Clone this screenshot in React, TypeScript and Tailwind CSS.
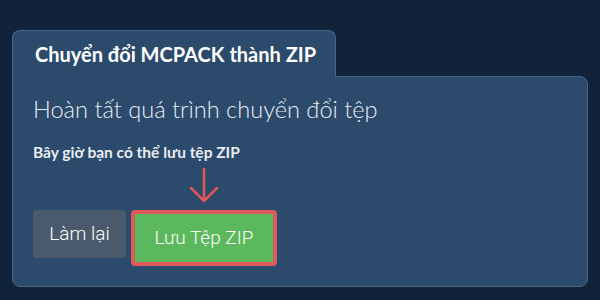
export default function App() {
  return (
    <div className="w-[600px] h-[300px] bg-[#10233a] px-[12px] pt-[30px] font-['Lato',sans-serif]">
      {/* Tab */}
      <div className="relative z-10 -mb-px w-[324px] h-[47px] bg-[#2c4a6b] border border-b-0 border-[#4a6586] rounded-t-[8px] pl-[22px] pt-[12px]">
        <span className="block text-[20px] font-bold text-white leading-[22px]">Chuyển đổi MCPACK thành ZIP</span>
      </div>

      {/* Panel */}
      <div className="w-[576px] h-[211px] bg-[#2c4a6b] border border-[#4a6586] rounded-[8px] rounded-tl-none pl-[20px] pt-[17px]">
        <h2 className="text-[23.6px] font-light text-[#e8edf3] leading-[30px]">
          Hoàn tất quá trình chuyển đổi tệp
        </h2>
        <p className="mt-[19px] text-[15.5px] font-bold text-[#e8edf3] leading-[18px]">
          Bây giờ bạn có thể lưu tệp ZIP
        </p>

        <div className="relative h-[49px]">
          <svg
            className="absolute left-[156px] top-[6px]"
            width="30"
            height="36"
            viewBox="0 0 30 36"
            fill="none"
            stroke="#e0585a"
            strokeWidth={2.5}
            strokeLinecap="round"
            strokeLinejoin="round"
          >
            <path d="M15 2v32" />
            <path d="M2 21l13 13 13-13" />
          </svg>
        </div>

        <div className="flex items-start gap-[5px] font-['Roboto',sans-serif]">
          <button className="w-[93px] h-[48px] rounded-[4px] bg-[#4b5b6d] text-[19px] font-light text-white">
            Làm lại
          </button>
          <button className="w-[146px] h-[56px] rounded-[4px] border-[4px] border-[#df5b5b] bg-[#5cb85c] text-[19px] font-light text-white">
            Lưu Tệp ZIP
          </button>
        </div>
      </div>
    </div>
  )
}
